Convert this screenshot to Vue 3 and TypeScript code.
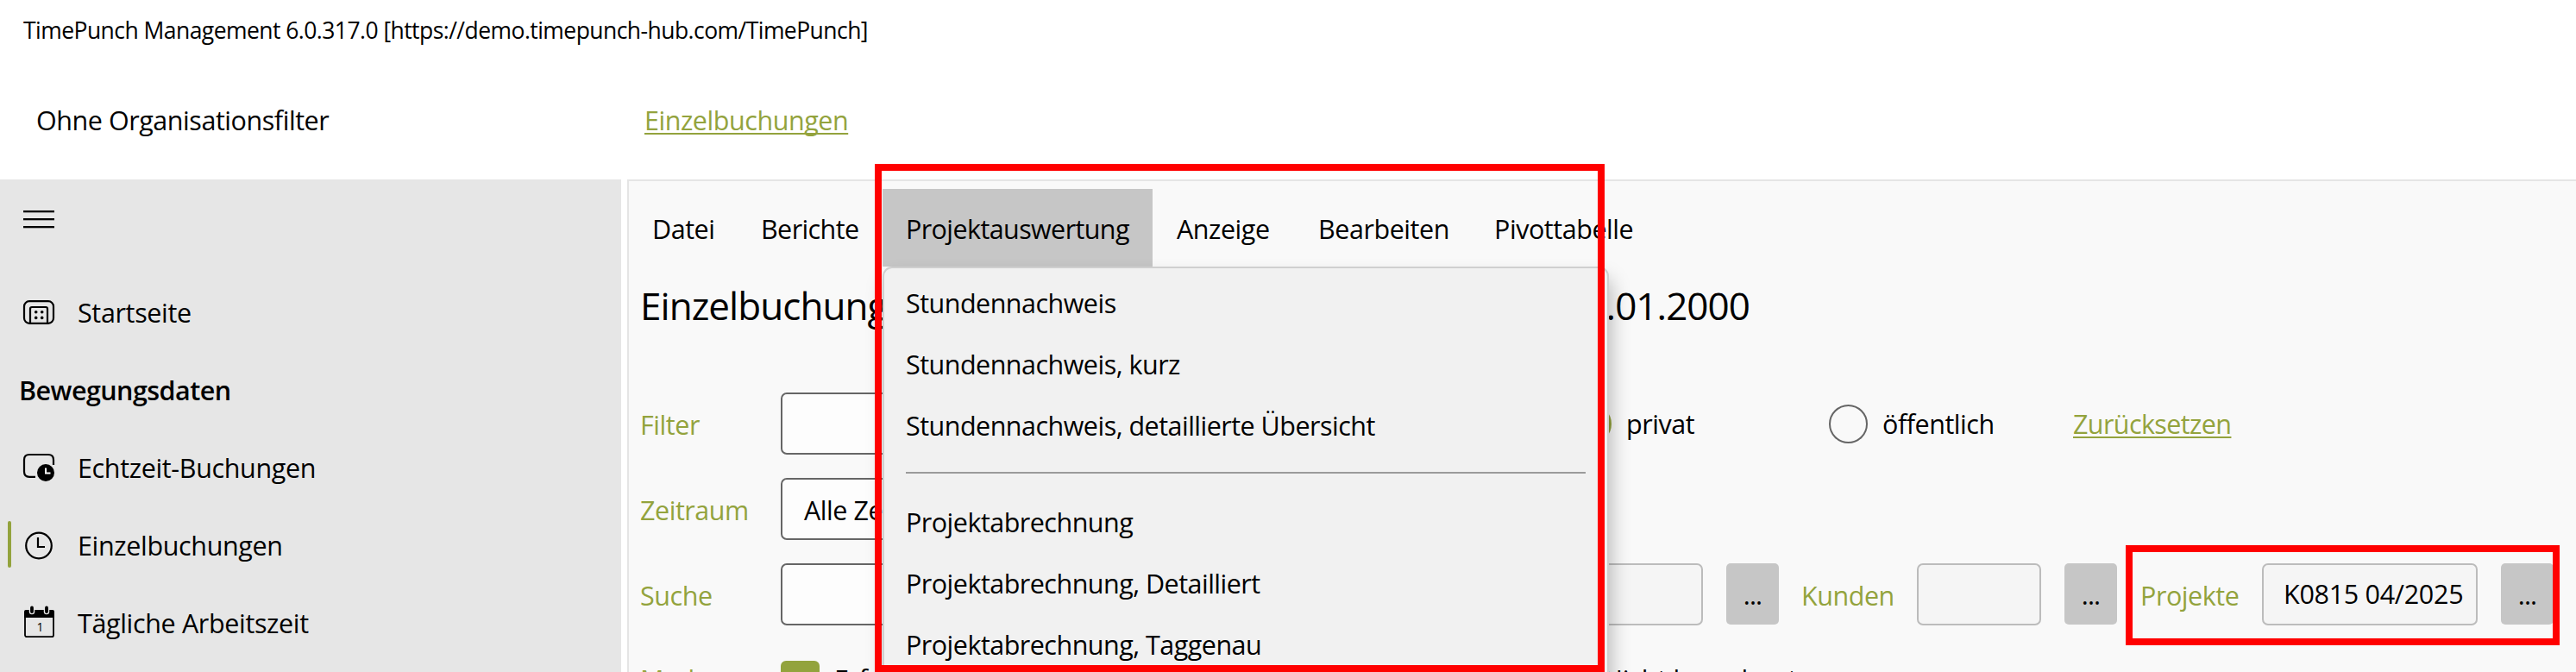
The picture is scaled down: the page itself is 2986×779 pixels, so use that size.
<script setup lang="ts">
type IconName = 'home' | 'realtime' | 'clock' | 'calendar'

interface NavItem {
  label: string
  icon?: IconName
  active?: boolean
}

const navItems: NavItem[] = [
  { label: 'Startseite', icon: 'home' },
  { label: 'Bewegungsdaten' },
  { label: 'Echtzeit-Buchungen', icon: 'realtime' },
  { label: 'Einzelbuchungen', icon: 'clock', active: true },
  { label: 'Tägliche Arbeitszeit', icon: 'calendar' },
]

const menus = [
  { label: 'Datei', size: 'm-datei' },
  { label: 'Berichte', size: 'm-berichte' },
  { label: 'Projektauswertung', size: 'm-projekt', open: true },
  { label: 'Anzeige', size: 'm-anzeige' },
  { label: 'Bearbeiten', size: 'm-bearbeiten' },
  { label: 'Pivottabelle', size: 'm-pivot' },
]

const reportGroups = [
  ['Stundennachweis', 'Stundennachweis, kurz', 'Stundennachweis, detaillierte Übersicht'],
  ['Projektabrechnung', 'Projektabrechnung, Detailliert', 'Projektabrechnung, Taggenau'],
]
</script>

<template>
  <div class="app">
    <div class="titlebar">TimePunch Management 6.0.317.0 [https://demo.timepunch-hub.com/TimePunch]</div>
    <header class="header">
      <span class="org">Ohne Organisationsfilter</span>
      <a class="link">Einzelbuchungen</a>
    </header>

    <div class="body">
      <nav class="sidebar">
        <div class="burger"><i></i><i></i><i></i></div>
        <div v-for="item in navItems" :key="item.label" class="nav" :class="{ group: !item.icon, active: item.active }">
          <svg v-if="item.icon === 'home'" class="icon" viewBox="0 0 36 36">
            <rect x="1" y="5.2" width="34" height="25.6" rx="6" fill="none" stroke="#000" stroke-width="2.2" />
            <path d="M8 30V14q0-2 2-2h16q2 0 2 2v16" fill="none" stroke="#000" stroke-width="2.2" />
            <g><circle cx="14.7" cy="17.8" r="1.8" /><circle cx="21.7" cy="17.8" r="1.8" /><circle cx="14.7" cy="24.4" r="1.8" /><circle cx="21.7" cy="24.4" r="1.8" /></g>
          </svg>
          <svg v-else-if="item.icon === 'realtime'" class="icon" viewBox="0 0 36 36">
            <path d="M14 28.8H7q-6 0-6-6V9q0-6 6-6h22q6 0 6 6v6" fill="none" stroke="#000" stroke-width="2.2" />
            <circle cx="26" cy="24" r="11.4" fill="#e6e6e6" />
            <circle cx="26" cy="24" r="10" />
            <path d="M26 18.5v6h5.5" fill="none" stroke="#fff" stroke-width="2" />
          </svg>
          <svg v-else-if="item.icon === 'clock'" class="icon" viewBox="0 0 36 36">
            <circle cx="18" cy="18.5" r="14.8" fill="none" stroke="#000" stroke-width="2.2" />
            <path d="M17 9v11h8" fill="none" stroke="#000" stroke-width="2.2" />
          </svg>
          <svg v-else-if="item.icon === 'calendar'" class="icon" viewBox="0 0 36 36">
            <rect x="2" y="5" width="33" height="29.2" rx="2" fill="none" stroke="#000" stroke-width="1.8" />
            <path d="M1 12V5q0-2 2-2h31q2 0 2 2v7z" />
            <path d="M10 1v4M27 1v4" stroke="#e6e6e6" stroke-width="6.5" stroke-linecap="round" />
            <path d="M10 .5v4.5M27 .5v4.5" stroke="#000" stroke-width="3.8" stroke-linecap="round" />
            <text x="19.3" y="28" text-anchor="middle" font-size="14" class="day">1</text>
          </svg>
          <span>{{ item.label }}</span>
        </div>
      </nav>

      <main class="panel">
        <div class="menubar">
          <div v-for="menu in menus" :key="menu.label" class="menu" :class="[menu.size, { open: menu.open }]">
            {{ menu.label }}
            <div v-if="menu.open" class="dropdown">
              <div v-for="(group, i) in reportGroups" :key="i" class="dropgroup">
                <div v-for="entry in group" :key="entry" class="entry">{{ entry }}</div>
              </div>
            </div>
          </div>
        </div>

        <h1 class="heading"><span>Einzelbuchungen</span><span>01.01.2000</span></h1>

        <div class="form">
          <div class="row">
            <label class="label">Filter</label>
            <div class="field filter"></div>
            <div class="choice private"><i class="radio checked"></i>privat</div>
            <div class="choice public"><i class="radio"></i>öffentlich</div>
            <a class="link reset">Zurücksetzen</a>
          </div>
          <div class="row">
            <label class="label">Zeitraum</label>
            <div class="field filter">Alle Zeiten</div>
          </div>
          <div class="row">
            <label class="label">Suche</label>
            <div class="field search"></div>
            <div class="field muted short"></div>
            <button class="more">...</button>
            <label class="label kunden">Kunden</label>
            <div class="field muted short"></div>
            <button class="more">...</button>
            <label class="label projekte">Projekte</label>
            <div class="field muted project">K0815 04/2025</div>
            <button class="more">...</button>
          </div>
          <div class="row flags">
            <label class="label">Marker</label>
            <div class="choice done"><i class="check"></i>Erfasst</div>
            <div class="choice unbilled"><i class="check"></i>Nicht berechnet</div>
          </div>
        </div>
      </main>
    </div>

    <div class="callout callout-menu"></div>
    <div class="callout callout-project"></div>
  </div>
</template>

<style>
body {
  margin: 0;
}
</style>

<style scoped>
.app {
  position: relative;
  width: 2986px;
  height: 779px;
  overflow: hidden;
  background: #fff;
  color: #000;
  font-family: "Open Sans", "Noto Sans", sans-serif;
  font-size: 30.5px;
  letter-spacing: -0.45px;
  line-height: 40px;
  white-space: nowrap;
}
.app * {
  box-sizing: border-box;
}
.titlebar {
  height: 70px;
  padding-left: 27px;
  font-size: 26.5px;
  letter-spacing: -0.55px;
  line-height: 71px;
}
.header {
  display: flex;
  align-items: center;
  height: 138px;
  padding-left: 42px;
}
.org {
  width: 705px;
}
.link {
  color: #93a33d;
  text-decoration: underline;
  text-decoration-thickness: 2px;
  text-underline-offset: 3px;
  text-decoration-skip-ink: none;
}
.reset {
  letter-spacing: -0.6px;
}
.body {
  display: flex;
  height: 571px;
}
.sidebar {
  width: 720px;
  margin-right: 7px;
  background: #e6e6e6;
}
.burger {
  display: flex;
  flex-direction: column;
  gap: 7px;
  height: 109px;
  padding: 36px 0 0 27px;
}
.burger i {
  width: 36px;
  height: 2px;
  background: #000;
  box-shadow: 0 1px #a0a0a0;
}
.nav {
  position: relative;
  display: flex;
  align-items: center;
  height: 90px;
  padding-left: 27px;
  letter-spacing: -0.35px;
}
.nav.group {
  padding-left: 22px;
  font-weight: 600;
  letter-spacing: -0.55px;
}
.nav.active::before {
  content: "";
  position: absolute;
  left: 9px;
  top: 17px;
  width: 4px;
  height: 54px;
  border-radius: 2px;
  background: #93a33d;
}
.icon {
  width: 36px;
  height: 36px;
  margin-right: 27px;
  overflow: visible;
}
.day {
  font-family: "Open Sans", sans-serif;
}
.panel {
  flex: 1;
  border: 2px solid #e5e5e5;
  border-right: 0;
  border-bottom: 0;
  background: #f9f9f9;
}
.menubar {
  display: flex;
  height: 99px;
  padding-top: 9px;
}
.menu {
  position: relative;
  height: 90px;
  padding-left: 26px;
  line-height: 92px;
}
.menu.open {
  z-index: 2;
  padding-left: 27px;
  background: #c6c6c6;
  letter-spacing: -0.6px;
}
.menu.m-datei { width: 127px; padding-left: 27px; }
.m-berichte { width: 167px; letter-spacing: -0.6px; }
.m-projekt { width: 313px; }
.menu.m-anzeige { width: 165px; padding-left: 28px; }
.menu.m-bearbeiten { width: 203px; padding-left: 27px; }
.menu.m-pivot { padding-left: 28px; }
.dropdown {
  position: absolute;
  left: 0;
  top: 90px;
  width: 842px;
  height: 520px;
  padding: 5px 25px 0 25px;
  border: 2px solid #cfcfcf;
  border-radius: 11px;
  background: #f1f1f1;
  box-shadow: 3px 14px 22px rgba(0, 0, 0, 0.26);
  letter-spacing: -0.52px;
}
.dropgroup + .dropgroup {
  margin-top: 18px;
  padding-top: 21px;
  border-top: 2px solid #9b9b9b;
}
.entry {
  height: 71px;
  line-height: 71px;
}
.heading {
  display: flex;
  justify-content: space-between;
  align-items: center;
  width: 1299px;
  height: 90px;
  margin: 0;
  padding-left: 13px;
  font-size: 44px;
  font-weight: 400;
  letter-spacing: -0.95px;
}
.form {
  display: flex;
  flex-direction: column;
  gap: 27px;
  padding: 56px 0 0 12px;
}
.row {
  display: flex;
  align-items: center;
  height: 72px;
}
.row.flags {
  padding-bottom: 3px;
}
.label {
  flex: none;
  width: 164px;
  padding: 2px 0 0 1px;
  color: #93a33d;
}
.flags .label {
  padding-top: 0;
}
.field {
  flex: none;
  height: 72px;
  padding-left: 25px;
  border: 2px solid #666;
  border-radius: 7px;
  background: #fdfdfd;
  line-height: 70px;
}
.field.filter {
  width: 850px;
  margin-right: 68px;
}
.field.search {
  width: 880px;
  margin-right: 45px;
}
.field.muted {
  border-color: #bcbcbc;
  background: #f5f5f5;
}
.short { width: 144px; }
.field.project {
  width: 250px;
  padding-left: 23px;
  line-height: 67px;
  letter-spacing: -0.3px;
}
.more {
  flex: none;
  width: 61px;
  height: 71px;
  margin: 0 0 1px 27px;
  padding: 0;
  border: 0;
  border-radius: 5px;
  background: #c6c6c6;
  color: #000;
  font: inherit;
  letter-spacing: -0.8px;
}
.kunden {
  width: 135px;
  margin-left: 25px;
}
.projekte {
  width: 142px;
  margin-left: 26px;
}
.choice {
  display: flex;
  align-items: center;
}
.private { width: 297px; }
.public { width: 283px; }
.done { width: 891px; }
.unbilled { letter-spacing: -0.2px; }
.radio {
  width: 45px;
  height: 45px;
  margin-right: 17px;
  border: 2px solid #666;
  border-radius: 50%;
}
.radio.checked {
  border: 12px solid #93a33d;
}
.check {
  width: 45px;
  height: 45px;
  margin: 3px 17px 0 0;
  border-radius: 6px;
  background: #93a33d;
}
.callout {
  position: absolute;
  z-index: 5;
  border: 8px solid #f00;
}
.callout-menu {
  left: 1014px;
  top: 190px;
  width: 846px;
  height: 589px;
}
.callout-project {
  left: 2464px;
  top: 632px;
  width: 503px;
  height: 116px;
}
</style>
